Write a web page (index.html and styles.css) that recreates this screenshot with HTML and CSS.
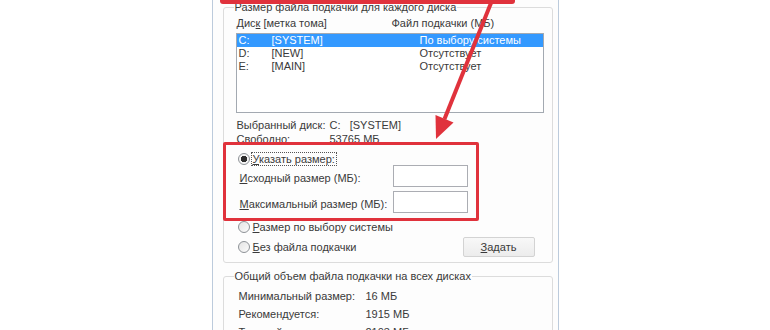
FILE: index.html
```html
<!DOCTYPE html>
<html lang="ru">
<head>
    <meta charset="UTF-8">
    <title>Виртуальная память</title>
    <link rel="stylesheet" href="styles.css">
</head>
<body>
    <div class="window">
        <fieldset class="group group-drives">
            <legend>Размер файла подкачки для каждого диска</legend>
            <div class="list-head">
                <span class="head-drive">Дис<u>к</u> [метка тома]</span>
                <span>Файл подкачки (МБ)</span>
            </div>
            <div class="listbox">
                <div class="list-row selected">
                    <span class="c-letter">C:</span><span class="c-label">[SYSTEM]</span><span>По выбору системы</span>
                </div>
                <div class="list-row">
                    <span class="c-letter">D:</span><span class="c-label">[NEW]</span><span>Отсутствует</span>
                </div>
                <div class="list-row">
                    <span class="c-letter">E:</span><span class="c-label">[MAIN]</span><span>Отсутствует</span>
                </div>
            </div>

            <div class="info-row first">
                <span class="info-label">Выбранный диск:</span>
                <span>C:&nbsp;&nbsp;&nbsp;[SYSTEM]</span>
            </div>
            <div class="info-row">
                <span class="info-label">Свободно:</span>
                <span>53765 МБ</span>
            </div>

            <div class="radio-row custom">
                <span class="radio checked"></span>
                <span class="focus"><u>У</u>казать размер:</span>
            </div>
            <div class="size-row">
                <label for="initSize"><u>И</u>сходный размер (МБ):</label>
                <input id="initSize" class="field" type="text">
            </div>
            <div class="size-row second">
                <label for="maxSize"><u>М</u>аксимальный размер (МБ):</label>
                <input id="maxSize" class="field" type="text">
            </div>
            <div class="radio-row system">
                <span class="radio"></span>
                <span class="radio-text"><u>Р</u>азмер по выбору системы</span>
            </div>
            <div class="radio-row none">
                <span class="radio"></span>
                <span class="radio-text"><u>Б</u>ез файла подкачки</span>
                <button class="btn" type="button"><u>З</u>адать</button>
            </div>
        </fieldset>

        <fieldset class="group group-total">
            <legend>Общий объем файла подкачки на всех дисках</legend>
            <div class="total-row">
                <span class="total-label">Минимальный размер:</span>
                <span>16 МБ</span>
            </div>
            <div class="total-row">
                <span class="total-label">Рекомендуется:</span>
                <span>1915 МБ</span>
            </div>
            <div class="total-row">
                <span class="total-label">Текущий размер:</span>
                <span>2103 МБ</span>
            </div>
        </fieldset>
    </div>

    <!-- red annotation over the screenshot -->
    <div class="mark-top"></div>
    <div class="mark-box"></div>
    <svg class="arrow" width="770" height="330" viewBox="0 0 770 330" xmlns="http://www.w3.org/2000/svg">
        <line x1="493" y1="-2" x2="444.5" y2="119" stroke="#e0323c" stroke-width="4"/>
        <polygon points="436,139 453.5,122.5 435.5,115" fill="#e0323c"/>
    </svg>
</body>
</html>
```

FILE: styles.css
```css
:root {
    --text-color: #3a3a3a;
    --frame-color: #bccbdc;
    --group-border: #dcdcdc;
    --select-color: #3399ff;
    --mark-color: #e0323c;
}

* {
    box-sizing: border-box;
}

body {
    margin: 0;
    height: 330px;
    overflow: hidden;
    position: relative;
    background-color: #fff;
    font-family: "Liberation Sans", Arial, sans-serif;
    font-size: 11px;
    color: var(--text-color);
    white-space: nowrap;
}

u {
    text-decoration: underline;
    text-underline-offset: 1px;
}

.window {
    width: 347px;
    height: 330px;
    margin: 0 auto;
    padding: 0 5px 0 10px;
    overflow: hidden;
    background-color: #fdfdfd;
    border-left: 1px solid var(--frame-color);
    border-right: 1px solid var(--frame-color);
}

/* group boxes */
.group {
    margin: 0;
    min-width: 0;
    padding: 0 8px 5px 12px;
    border: 1px solid var(--group-border);
    border-radius: 3px;
}

.group legend {
    height: 14px;
    line-height: 14px;
    padding: 0 1px;
    margin-left: -2px;
}

/* drive list */
.list-head {
    display: flex;
    height: 14px;
    line-height: 14px;
    margin-top: 2px;
    padding-left: 1px;
}

.head-drive {
    flex-shrink: 0;
    width: 155px;
}

.listbox {
    height: 80px;
    margin-top: 3px;
    background-color: #fff;
    border: 1px solid #a3a9b1;
}

.list-row {
    display: flex;
    height: 13px;
    line-height: 13px;
    padding-left: 2px;
}

.list-row.selected {
    background-color: var(--select-color);
    color: #fff;
}

.c-letter {
    flex-shrink: 0;
    width: 33px;
}

.c-label {
    flex-shrink: 0;
    width: 148px;
}

.info-row {
    display: flex;
    height: 14px;
    line-height: 14px;
    padding-left: 1px;
}

.info-row.first {
    margin-top: 5px;
}

.info-label {
    flex-shrink: 0;
    width: 93px;
}

/* radio buttons and sizes */
.radio-row {
    display: flex;
    align-items: center;
    height: 14px;
    line-height: 14px;
}

.radio-row.custom {
    height: 13px;
    margin-top: 6px;
}

.radio-row.system {
    margin-top: 7px;
}

.radio-row.none {
    height: 21px;
    margin-top: 2px;
}

.radio {
    flex-shrink: 0;
    width: 12px;
    height: 12px;
    margin-left: 2px;
    border: 1px solid #8e9297;
    border-radius: 50%;
    background: linear-gradient(135deg, #e4e4e4, #fbfbfb);
}

.radio.checked {
    background: radial-gradient(circle, #2e2e2e 0 3px, #f4f4f4 3.5px);
}

.radio-text {
    margin-left: 3px;
}

.focus {
    margin-left: 1px;
    padding: 0 1px;
    line-height: 12px;
    border: 1px dotted #555;
}

.size-row {
    display: flex;
    align-items: center;
    height: 22px;
}

.size-row.second {
    margin-top: 4px;
}

.size-row label {
    flex-shrink: 0;
    width: 157px;
    padding: 3px 0 0 4px;
}

.field {
    flex-shrink: 0;
    width: 75px;
    height: 22px;
    border: 1px solid #abadb3;
    background-color: #fff;
}

.btn {
    flex-shrink: 0;
    width: 72px;
    height: 20px;
    margin: 0 9px 0 auto;
    padding: 0;
    font-family: inherit;
    font-size: 11px;
    color: var(--text-color);
    border: 1px solid #d3d3d3;
    border-radius: 2px;
    background: linear-gradient(#f8f8f8, #ececec);
}

/* totals */
.group-total {
    margin-top: 6px;
}

.total-row {
    display: flex;
    height: 14px;
    line-height: 14px;
    margin-top: 4px;
    padding-left: 3px;
}

.total-row:first-of-type {
    margin-top: 6px;
}

.total-label {
    flex-shrink: 0;
    width: 127px;
}

/* red annotation */
.mark-top {
    position: absolute;
    left: 220px;
    top: -4px;
    width: 295px;
    height: 8px;
    border-radius: 3px;
    background-color: var(--mark-color);
}

.mark-box {
    position: absolute;
    left: 223px;
    top: 142px;
    width: 256px;
    height: 79px;
    border: 3px solid var(--mark-color);
    border-radius: 2px;
}

.arrow {
    position: absolute;
    left: 0;
    top: 0;
    pointer-events: none;
}
```
